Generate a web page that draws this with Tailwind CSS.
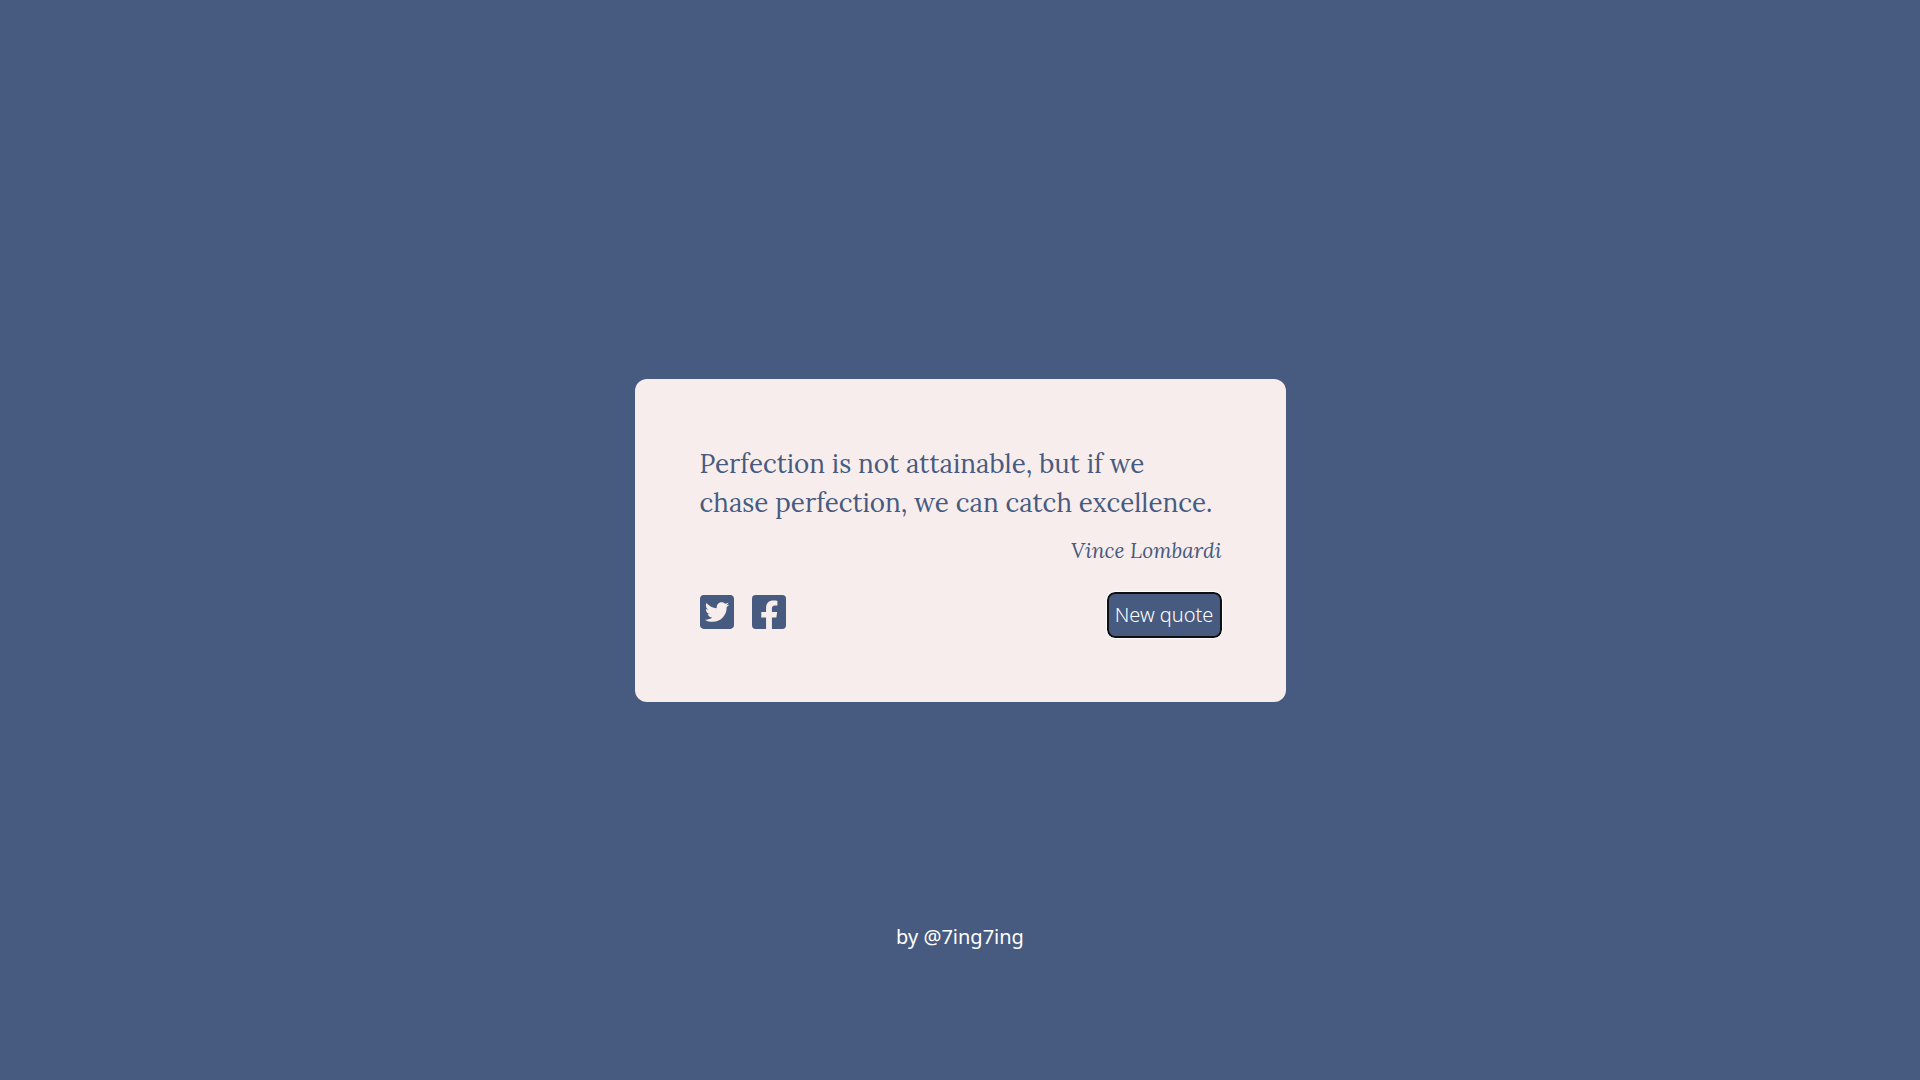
<!DOCTYPE html>
<html lang="en">
<head>
<meta charset="utf-8">
<meta name="viewport" content="width=device-width, initial-scale=1">
<title>Random Quote</title>
<script src="https://cdn.jsdelivr.net/npm/@tailwindcss/browser@4"></script>
</head>
<body class="grid min-h-screen grid-rows-[1fr_auto_1fr] justify-items-center bg-[#475a80] font-['Noto_Sans',sans-serif] text-xl text-white">
  <main class="row-start-2 w-full max-w-[651px] rounded-xl bg-[#f7edec] pt-[65px] pr-16 pb-16 pl-[65px] text-[#475a80]">
    <blockquote class="font-['Lora','Liberation_Serif',serif]">
      <p class="text-[26px] leading-[39px]">Perfection is not attainable, but if we<br>chase perfection, we can catch excellence.</p>
      <footer class="mt-[14px] text-right text-[21px] leading-[30px] italic">Vince Lombardi</footer>
    </blockquote>
    <div class="mt-[26px] flex items-start justify-between">
      <div class="flex gap-[18px] pt-[3px]">
        <a href="#" aria-label="Share on Twitter">
          <svg class="size-[34px] fill-current" viewBox="0 32 448 448"><path d="M400 32H48C21.500 32 0 53.500 0 80v352c0 26.500 21.500 48 48 48h352c26.500 0 48-21.500 48-48V80c0-26.500-21.500-48-48-48zm-48.900 158.800c.2 2.800.2 5.700.2 8.500 0 86.700-66 186.600-186.600 186.600-37.200 0-71.700-10.800-100.700-29.400 5.300.6 10.400.8 15.800.8 30.700 0 58.900-10.400 81.400-28-28.800-.6-53-19.500-61.300-45.500 10.100 1.500 19.200 1.500 29.600-1.200-30-6.100-52.500-32.500-52.500-64.400v-.8c8.700 4.900 18.900 7.900 29.600 8.300a65.447 65.447 0 0 1-29.200-54.600c0-12.200 3.200-23.400 8.900-33.100 32.300 39.800 80.800 65.800 135.200 68.600-9.300-44.500 24-80.600 64-80.600 18.900 0 35.900 7.900 47.900 20.700 14.800-2.800 29-8.300 41.600-15.800-4.900 15.200-15.200 28-28.800 36.100 13.200-1.400 26-5.100 37.800-10.200-8.900 13.100-20.100 24.700-32.900 34z"/></svg>
        </a>
        <a href="#" aria-label="Share on Facebook">
          <svg class="size-[34px] fill-current" viewBox="0 32 448 448"><path d="M400 32H48A48 48 0 0 0 0 80v352a48 48 0 0 0 48 48h137.250V327.690h-63V256h63v-54.640c0-62.150 37-96.480 93.670-96.480 27.140 0 55.520 4.840 55.520 4.840v61h-31.270c-30.810 0-40.420 19.120-40.420 38.730V256h68.780l-11 71.690h-57.780V480H400a48 48 0 0 0 48-48V80a48 48 0 0 0-48-48z"/></svg>
        </a>
      </div>
      <button type="button" class="h-[46px] w-[115px] rounded-lg border-2 border-[#101010] bg-[#475a80] font-light whitespace-nowrap text-white outline outline-white">New quote</button>
    </div>
  </main>
  <footer class="row-start-3 pt-[221px] pb-10">by <a href="#">@7ing7ing</a></footer>
</body>
</html>
